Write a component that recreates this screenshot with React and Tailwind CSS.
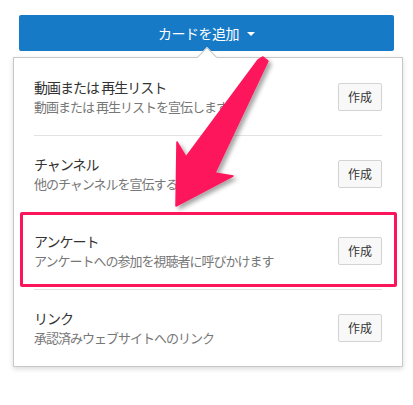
import React from 'react';

const cards = [
  { title: '動画または 再生リスト', desc: '動画または 再生リストを宣伝します' },
  { title: 'チャンネル', desc: '他のチャンネルを宣伝する' },
  { title: 'アンケート', desc: 'アンケートへの参加を視聴者に呼びかけます' },
  { title: 'リンク', desc: '承認済みウェブサイトへのリンク' },
];

function CardRow({ title, desc, first }) {
  return (
    <div className={`flex h-[77px] items-center justify-between ${first ? '' : 'border-t border-[#e2e2e2]'}`}>
      <div className="flex flex-col">
        <span className="text-[14px] leading-[20px] tracking-[-1px] text-[#333]">{title}</span>
        <span className="text-[13px] leading-[20px] tracking-[-1px] text-[#777]">{desc}</span>
      </div>
      <button className="h-[28px] w-[44px] rounded-[2px] border border-[#d3d3d3] bg-[#f8f8f8] text-[12px] text-[#333]">
        作成
      </button>
    </div>
  );
}

export default function App() {
  return (
    <div className="relative h-[405px] w-[413px] bg-white font-['Noto_Sans_CJK_JP',sans-serif]">
      <div className="flex flex-col pt-[15px]">
        <button className="mx-[19px] flex h-[36px] items-center justify-center gap-[8px] rounded-[2px] bg-[#167ac6] text-[14px] tracking-[-0.5px] text-white">
          カードを追加
          <span className="mt-[1px] h-0 w-0 border-x-[4px] border-t-[4px] border-x-transparent border-t-white" />
        </button>

        <div className="relative ml-[13px] mr-[10px] mt-[6px] border border-[#c8c8c8] bg-white shadow-[0_2px_5px_rgba(0,0,0,0.15)]">
          <div className="absolute left-[186px] top-[-8px] h-[14px] w-[14px] rotate-45 border-l border-t border-[#c8c8c8] bg-white" />
          <div className="relative px-[20px]">
            {cards.map((c, i) => (
              <CardRow key={c.title} title={c.title} desc={c.desc} first={i === 0} />
            ))}
          </div>
        </div>
      </div>

      {/* annotation: highlight box + arrow */}
      <div className="pointer-events-none absolute left-[20px] top-[212px] h-[75px] w-[377px] rounded-[2px] border-[3px] border-[#fd155c]" />
      <svg className="pointer-events-none absolute inset-0" width="413" height="405" viewBox="0 0 413 405">
        <defs>
          <filter id="arrowShadow" x="-20%" y="-20%" width="140%" height="140%">
            <feDropShadow dx="3" dy="3" stdDeviation="2" floodColor="#000" floodOpacity="0.35" />
          </filter>
        </defs>
        <polygon
          points="258,60 263,57 268,61 215,173 233,176 176,206 177,142 186,157"
          fill="#fd155c"
          stroke="#fd155c"
          strokeWidth="1.5"
          strokeLinejoin="round"
          filter="url(#arrowShadow)"
        />
      </svg>
    </div>
  );
}
